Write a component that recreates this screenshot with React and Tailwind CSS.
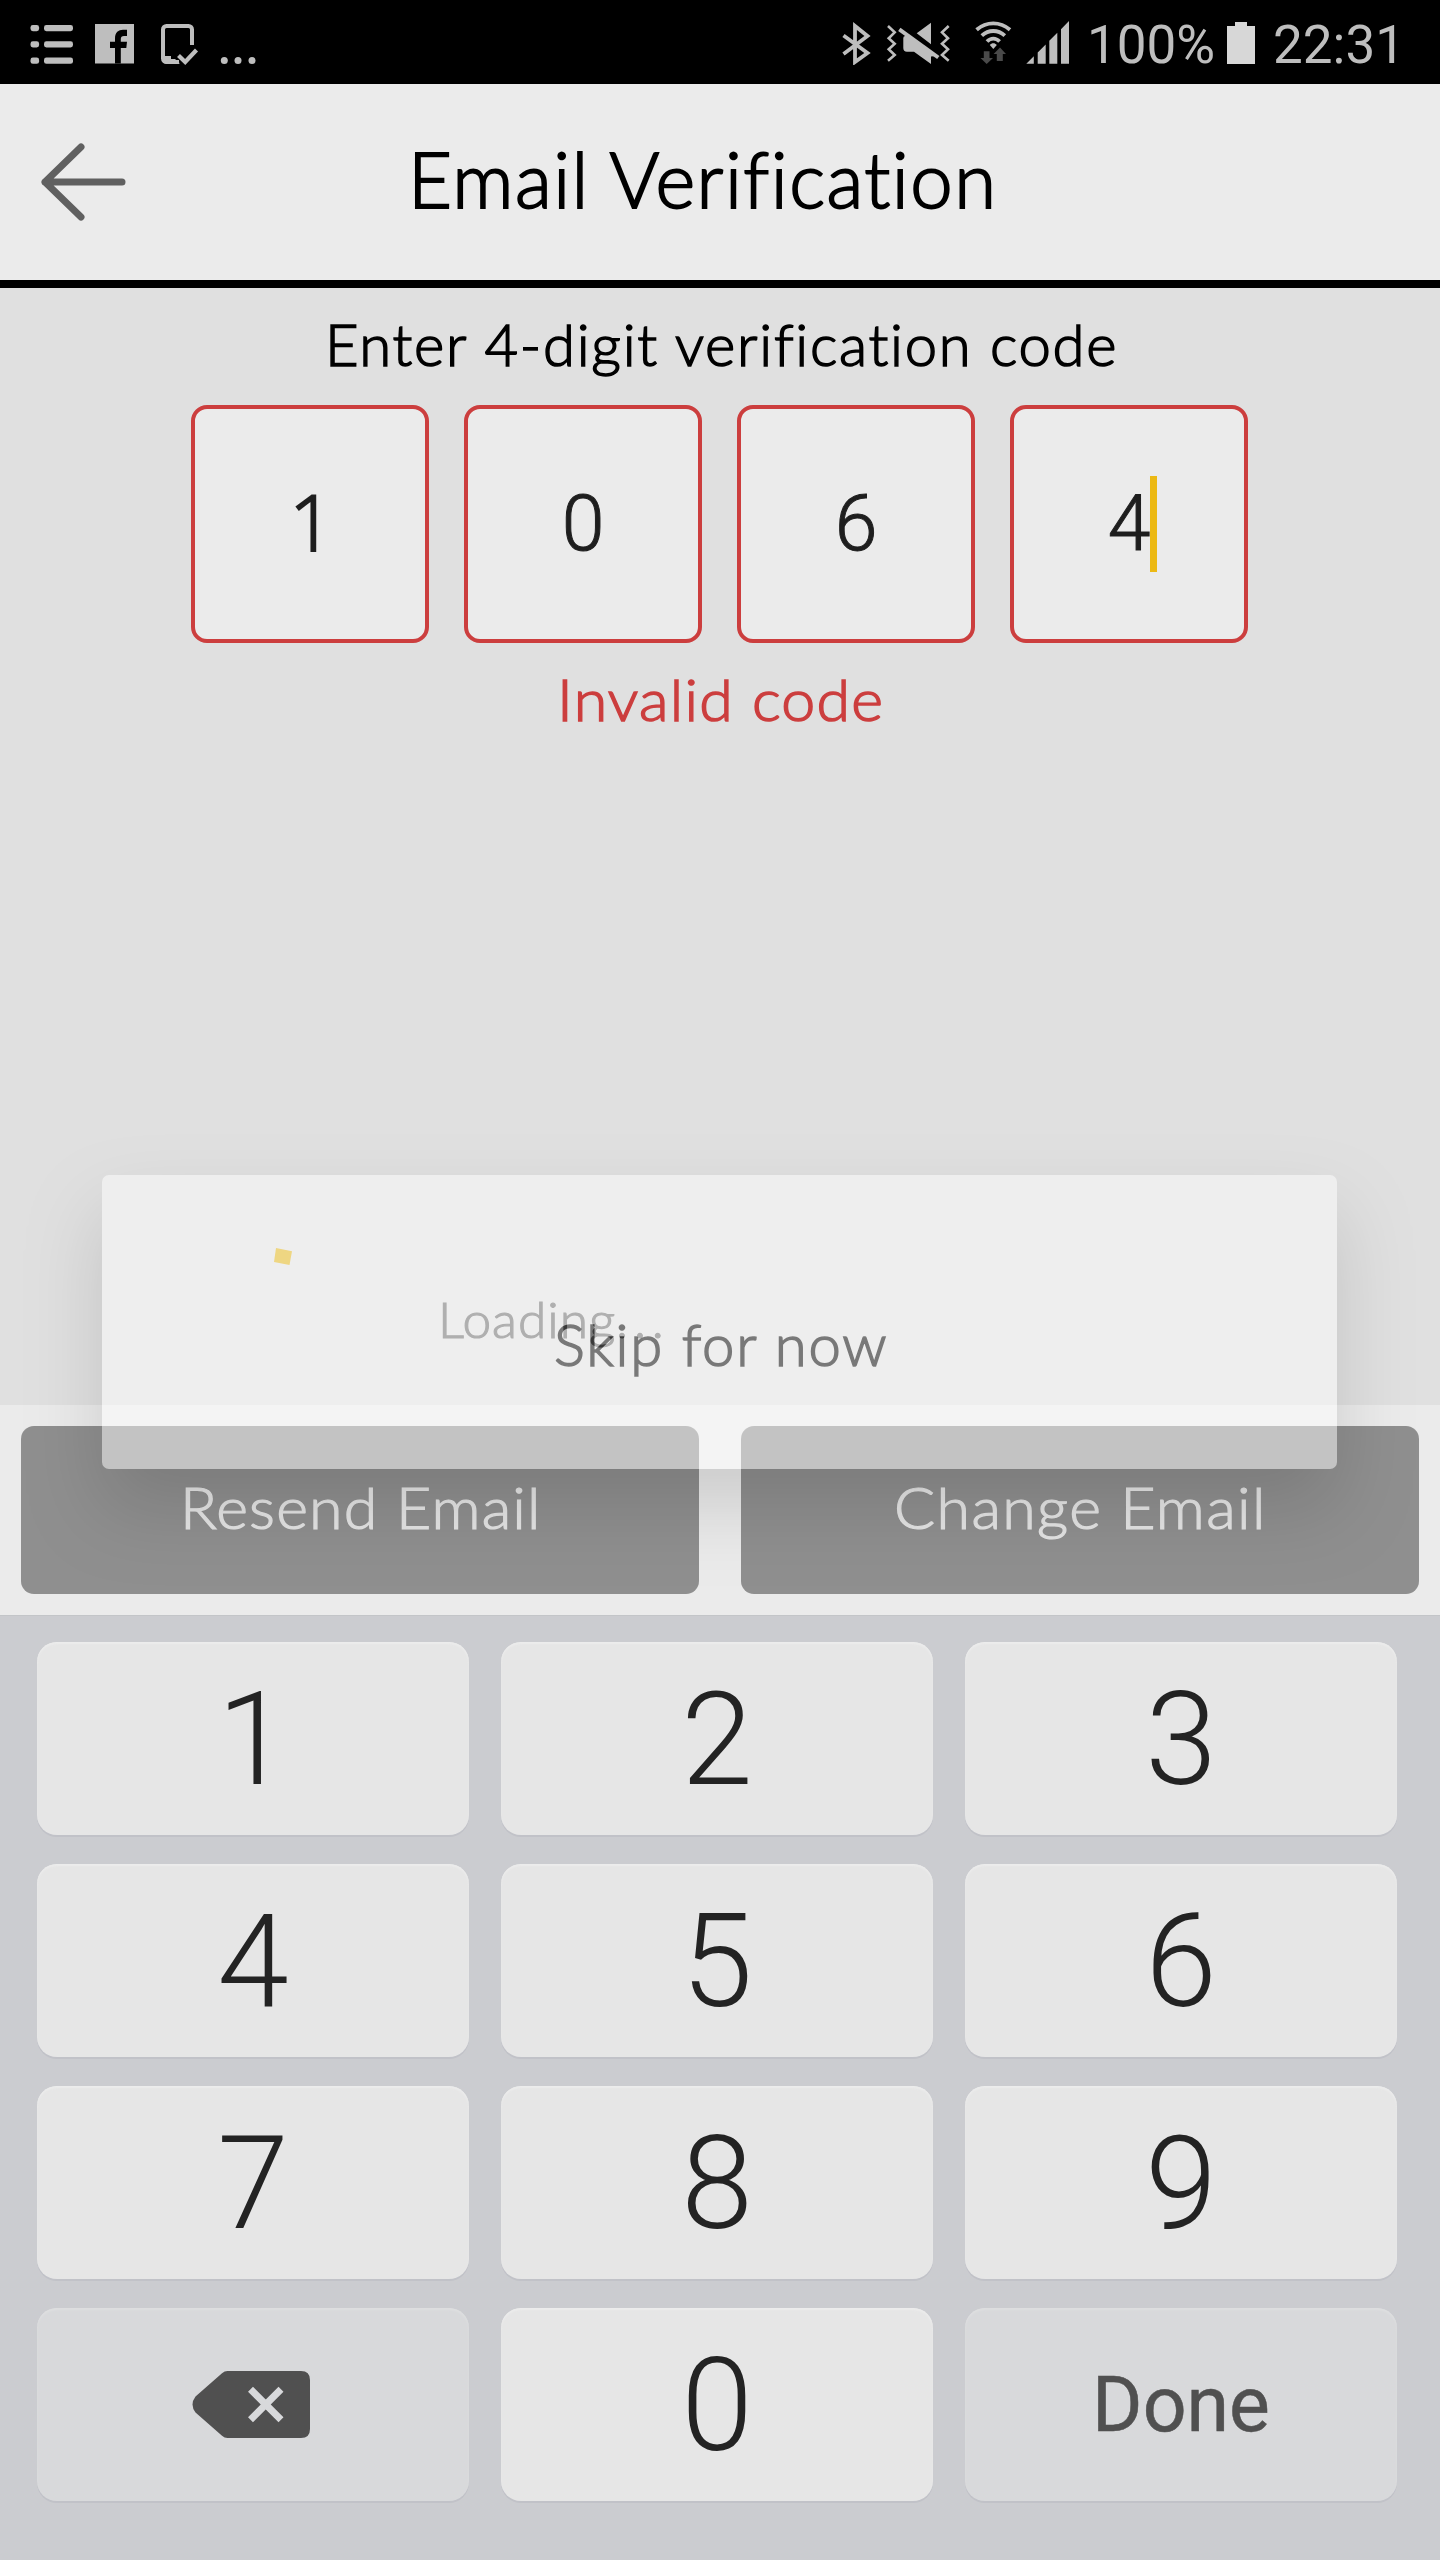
import React from "react";

const ListIcon = () => (
  <svg width="44" height="44" viewBox="0 0 44 44" fill="#bebebe">
    {[4, 20.3, 36.6].map((y) => (
      <g key={y}>
        <rect x="0.5" y={y} width="8.6" height="6.2" rx="2.4" />
        <rect x="14" y={y} width="29" height="6.2" rx="2.4" />
      </g>
    ))}
  </svg>
);

const FacebookIcon = () => (
  <svg className="ml-[21px]" width="39" height="44" viewBox="0 0 39 44">
    <rect y="3" width="39" height="39.5" fill="#bebebe" />
    <path
      fill="#000"
      d="M20 42.5V27h-5v-6.300h5v-3.500C20 11.500 23.500 8.700 28 8.700h4V15h-3c-2.200 0-3.200 1-3.200 3v2.700H32L31.300 27h-5.500v15.500z"
    />
  </svg>
);

const TabletIcon = () => (
  <svg className="ml-[26px]" width="39" height="44" viewBox="0 0 39 44" fill="none" stroke="#bebebe">
    <path strokeWidth="4" d="M32 24V8.500A3.500 3.500 0 0 0 28.500 5h-22A3.500 3.500 0 0 0 3 8.500v29A3.500 3.500 0 0 0 6.500 41H19" />
    <path stroke="none" fill="#bebebe" d="M3 35h8v3h4l5 4.500H5z" />
    <path strokeWidth="4.200" d="M18.500 34.500l6.700 6.500L36.500 29" />
  </svg>
);

const MoreIcon = () => (
  <svg className="ml-[21px]" width="36" height="44" viewBox="0 0 36 44" fill="#bebebe">
    <circle cx="4.300" cy="39.500" r="3.500" />
    <circle cx="18" cy="39.500" r="3.500" />
    <circle cx="32" cy="39.500" r="3.500" />
  </svg>
);

const BluetoothIcon = () => (
  <svg width="30" height="44" viewBox="0 -2 30 44" fill="none" stroke="#bebebe" strokeWidth="3.800">
    <path d="M1.500 12.500L25.500 30 13 39V3l12.500 10L1.500 31" />
  </svg>
);

const MuteIcon = () => (
  <svg className="ml-[14px]" width="65" height="46" viewBox="0 0 65 46" fill="none" stroke="#bebebe">
    <path strokeWidth="2.600" d="M2 6l6.700 6.300-6 6 6 5.400-6 5.600 6 5.700L2 40.700M62.700 6L56 12.300l6 6-6 5.400 6 5.600-6 5.700 6.700 5.700" />
    <path strokeWidth="4" d="M13.300 9.300l39 28.200" />
    <path stroke="none" fill="#bebebe" d="M30.700 13.300L45 2.700v21.600zM17.300 18q0-2 2-2h3L50 36l-5 .5V44L28 31.700h-7q-3.700 0-3.700-3.700z" />
  </svg>
);

const WifiIcon = () => (
  <svg className="ml-[23px]" width="39" height="46" viewBox="0 0 39 46" fill="none" stroke="#bebebe">
    <path strokeWidth="3.800" d="M2.600 9.800C12.500 1.200 26 1.200 36 9.800" />
    <path strokeWidth="3.800" d="M7.800 15.700c6.800-6.300 16.200-6.300 23 0" />
    <path strokeWidth="3.800" d="M13 21.500c3.800-3.900 8.800-3.900 12.600 0" />
    <path stroke="none" fill="#bebebe" d="M19.300 29l-3.500-4c2-2.200 5-2.200 7 0z" />
    <path stroke="none" fill="#4a4a4a" d="M9.800 31.300h5.700v6.700H19L12.700 44 6.500 38h3.300zM26 27.500l6 6.500h-3.200v7h-6v-7h-3.200z" />
  </svg>
);

const SignalIcon = () => (
  <svg className="ml-[13px]" width="44" height="46" viewBox="0 0 44 46" fill="#bebebe">
    <path d="M.3 43.700h7.500v-7.500zM11.700 43.700V32.500l8-8v19.200zM23.300 43.700V20.800l8-8v30.900zM35 43.700V9.200l8-8.200v42.700z" />
  </svg>
);

const BatteryIcon = () => (
  <svg className="ml-[12px]" width="28" height="42" viewBox="0 0 28 42" fill="#d7d7d7">
    <path d="M0 4h8V0h12v4h8v38H0z" />
  </svg>
);

const BackspaceIcon = () => (
  <svg width="120" height="70" viewBox="0 0 120 70" className="-ml-[5px]">
    <path
      fill="#505050"
      d="M36.500 1H110q9 0 9 9v49q0 9-9 9H36.500q-3 0-5.500-2.200L4.500 42.500q-6-8 0-16L31 3.200Q33.500 1 36.500 1z"
    />
    <path stroke="#d8d9db" strokeWidth="7" d="M59.500 19.300l30.500 30.500M90 19.300L59.500 49.800" />
  </svg>
);

const StatusBar = () => (
  <div className="flex h-[84px] items-center bg-black pl-[30px] pr-[28px] pt-[2px] font-['Roboto',sans-serif] text-[53px] font-normal leading-[62px] text-[#bebebe]">
    <ListIcon />
    <FacebookIcon />
    <TabletIcon />
    <MoreIcon />
    <div className="ml-auto flex w-[570px] items-center">
      <BluetoothIcon />
      <MuteIcon />
      <WifiIcon />
      <SignalIcon />
      <span className="ml-[17px] w-[128px] whitespace-nowrap pt-[3px]">100%</span>
      <BatteryIcon />
      <span className="ml-[18px] whitespace-nowrap pt-[3px]">22:31</span>
    </div>
  </div>
);

const Header = () => (
  <header className="flex h-[204px] items-center border-b-8 border-black bg-[#ebebeb] pl-[37px]">
    <svg width="92" height="84" viewBox="0 0 92 84" fill="none" stroke="#606060" strokeLinecap="round" strokeLinejoin="round" strokeWidth="7">
      <path d="M85 42H8M44 7L8 42l36 35" />
    </svg>
    <h1 className="ml-[279px] whitespace-nowrap pb-[8px] text-[76px] leading-[91px] tracking-[1.5px] [-webkit-text-stroke:1.9px_#000]">
      Email Verification
    </h1>
  </header>
);

const codeDigits = [
  { value: "1", face: "font-['Open_Sans',sans-serif] text-[78px] pb-[6px] pl-[3px] [-webkit-text-stroke:2px_#1e1e1e]" },
  { value: "0", face: "font-['Roboto',sans-serif] text-[77px] [-webkit-text-stroke:1px_#1e1e1e]" },
  { value: "6", face: "font-['Roboto',sans-serif] text-[77px] [-webkit-text-stroke:1px_#1e1e1e]" },
  { value: "4", face: "font-['Roboto',sans-serif] text-[77px] [-webkit-text-stroke:1px_#1e1e1e]", cursor: true },
];

const CodeInput = () => (
  <div className="mt-[27px] flex gap-[35px] pl-[191px]">
    {codeDigits.map(({ value, face, cursor }) => (
      <div
        key={value}
        className="relative flex size-[238px] items-center justify-center rounded-[16px] border-4 border-[#cc3e3e] bg-[#ebebeb]"
      >
        <span className={`${face} leading-[90px] text-[#1e1e1e]`}>{value}</span>
        {cursor && <i className="absolute left-[136px] top-[67px] h-[96px] w-[7px] bg-[#ecb914]" />}
      </div>
    ))}
  </div>
);

const LoadingDialog = () => (
  <div className="absolute left-[102px] top-[1175px] h-[294px] w-[1235px] rounded-[7px] bg-white opacity-[0.47] shadow-[0_38px_76px_rgba(0,0,0,0.28)]">
    <svg className="ml-[171px] mt-[72px]" width="20" height="20" viewBox="0 0 20 20">
      <path fill="#fecb1a" d="M3 1l16 3.200L16.500 18 1 15z" />
    </svg>
    <p className="ml-[336px] mt-[23px] origin-left scale-x-[1.05] whitespace-nowrap text-[49px] leading-[58px] tracking-[0.9px] text-[#7a7a7a] [-webkit-text-stroke:1.1px_#7a7a7a]">
      Loading<span className="tracking-[5.5px]">...</span>
    </p>
  </div>
);

const keys = ["1", "2", "3", "4", "5", "6", "7", "8", "9", "del", "0", "Done"];

const Key = ({ label }) => {
  const isAction = label === "del" || label === "Done";
  return (
    <button
      className={`flex h-[193px] items-center justify-center rounded-[20px] ${
        isAction
          ? "bg-[#d8d9db] shadow-[0_2px_0_#c1c2c8,inset_0_2px_2px_#dedfe0]"
          : "bg-[#e6e6e6] shadow-[0_2px_0_#c1c2c8,inset_0_2px_2px_#ececec]"
      }`}
    >
      {label === "del" && <BackspaceIcon />}
      {label === "Done" && (
        <span className="text-[77px] font-normal leading-[90px] text-[#505050] [-webkit-text-stroke:0.5px_#505050]">Done</span>
      )}
      {!isAction && (
        <span className="pt-[1px] text-[129px] font-light leading-[151px] text-[#232323]">{label}</span>
      )}
    </button>
  );
};

const Keyboard = () => (
  <div className="grid h-[945px] grid-cols-[repeat(3,432px)] content-start gap-x-[32px] gap-y-[29px] border-t border-[#c3c5c8] bg-[#cbccd0] pl-[37px] pt-[26px] font-['Roboto',sans-serif]">
    {keys.map((k) => (
      <Key key={k} label={k} />
    ))}
  </div>
);

export default function App() {
  return (
    <div className="relative h-[2560px] w-[1440px] overflow-hidden bg-[#e0e0e0] font-['Lato',sans-serif] font-light text-black">
      <StatusBar />
      <Header />
      <main className="flex h-[1117px] flex-col text-[58px] leading-[69px]">
        <p className="whitespace-nowrap pl-[325px] pt-[21px] tracking-[1.72px] [-webkit-text-stroke:1.5px_#000]">
          Enter 4-digit verification code
        </p>
        <CodeInput />
        <p className="mt-[21px] pl-[557px]">
          <span className="inline-block origin-left scale-x-[1.05] whitespace-nowrap tracking-[1.2px] text-[#cc3e3e] [-webkit-text-stroke:1.5px_#cc3e3e]">
            Invalid code
          </span>
        </p>
        <p className="mb-[27px] mt-auto whitespace-nowrap pl-[554px] tracking-[1.8px] [-webkit-text-stroke:1.5px_#000]">
          Skip for now
        </p>
      </main>
      <div className="flex h-[210px] gap-[42px] bg-[#ebebeb] px-[21px] py-[21px] text-[58px] leading-[69px] text-[#e4e4e4]">
        <button className="w-[678px] rounded-[13px] bg-[#8f8f8f] pb-[7px] pl-[159px] text-left">
          <span className="inline-block origin-left scale-x-[1.05] whitespace-nowrap tracking-[1.1px] [-webkit-text-stroke:1.2px_#e4e4e4]">
            Resend Email
          </span>
        </button>
        <button className="w-[678px] rounded-[13px] bg-[#8f8f8f] pb-[7px] pl-[153px] text-left">
          <span className="inline-block origin-left scale-x-[1.05] whitespace-nowrap tracking-[1.3px] [-webkit-text-stroke:1.2px_#e4e4e4]">
            Change Email
          </span>
        </button>
      </div>
      <Keyboard />
      <LoadingDialog />
    </div>
  );
}
